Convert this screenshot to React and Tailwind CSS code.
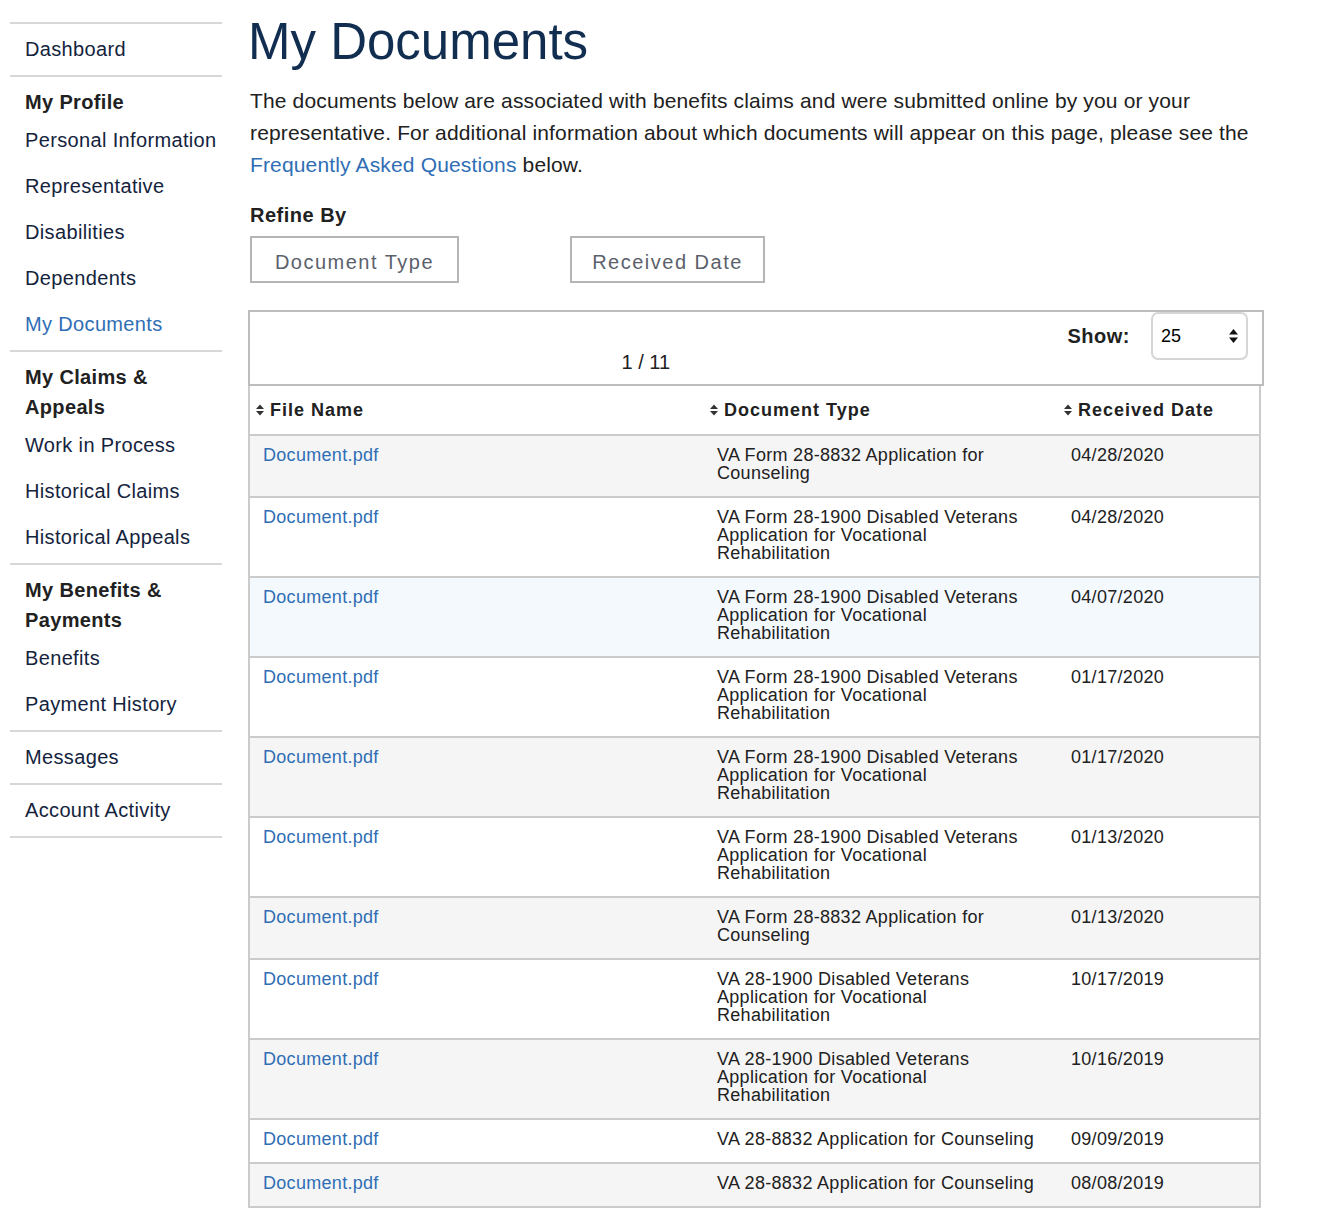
import React from "react";

const FORM_8832 = "VA Form 28-8832 Application for Counseling";
const FORM_1900 = "VA Form 28-1900 Disabled Veterans Application for Vocational Rehabilitation";
const VA_1900 = "VA 28-1900 Disabled Veterans Application for Vocational Rehabilitation";
const VA_8832 = "VA 28-8832 Application for Counseling";

const documents = [
  { type: FORM_8832, date: "04/28/2020", bg: "bg-[#f5f5f5]" },
  { type: FORM_1900, date: "04/28/2020", bg: "bg-white" },
  { type: FORM_1900, date: "04/07/2020", bg: "bg-[#f4f9fe]" },
  { type: FORM_1900, date: "01/17/2020", bg: "bg-white" },
  { type: FORM_1900, date: "01/17/2020", bg: "bg-[#f5f5f5]" },
  { type: FORM_1900, date: "01/13/2020", bg: "bg-white" },
  { type: FORM_8832, date: "01/13/2020", bg: "bg-[#f5f5f5]" },
  { type: VA_1900, date: "10/17/2019", bg: "bg-white" },
  { type: VA_1900, date: "10/16/2019", bg: "bg-[#f5f5f5]" },
  { type: VA_8832, date: "09/09/2019", bg: "bg-white" },
  { type: VA_8832, date: "08/08/2019", bg: "bg-[#f5f5f5]" },
];

const navSections = [
  { items: [{ label: "Dashboard" }] },
  {
    title: "My Profile",
    items: [
      { label: "Personal Information" },
      { label: "Representative" },
      { label: "Disabilities" },
      { label: "Dependents" },
      { label: "My Documents", active: true },
    ],
  },
  {
    title: "My Claims & Appeals",
    items: [{ label: "Work in Process" }, { label: "Historical Claims" }, { label: "Historical Appeals" }],
  },
  {
    title: "My Benefits & Payments",
    items: [{ label: "Benefits" }, { label: "Payment History" }],
  },
  { items: [{ label: "Messages" }] },
  { items: [{ label: "Account Activity" }] },
];

function SortIcon({ className = "" }) {
  return (
    <svg width="8" height="12" viewBox="0 0 8 12" className={className}>
      <path d="M0 5 L4 0.5 L8 5 Z" fill="currentColor" />
      <path d="M0 7 L4 11.5 L8 7 Z" fill="currentColor" />
    </svg>
  );
}

function SideNav() {
  return (
    <nav className="mt-[22px] ml-[10px] w-[212px] shrink-0 border-b-2 border-[#d6d7d9] tracking-[0.35px]">
      {navSections.map((section, i) => (
        <div key={i} className="border-t-2 border-[#d6d7d9] pt-[10px] pb-[11px] pl-[15px] pr-[4px]">
          {section.title && (
            <div className="text-[20px] leading-[30px] font-bold text-[#212121]">{section.title}</div>
          )}
          {section.items.map((item, j) => (
            <a
              key={item.label}
              href="#"
              className={`block text-[20px] leading-[30px] ${
                section.title ? (j === 0 ? "mt-[8px]" : "mt-[16px]") : ""
              } ${item.active ? "text-[#2f6eb5]" : "text-[#14233d]"}`}
            >
              {item.label}
            </a>
          ))}
        </div>
      ))}
    </nav>
  );
}

function DocumentsTable() {
  return (
    <div className="mt-[27px]">
      <div className="w-[1016px] h-[76px] border-2 border-[#bdbdbd] flex">
        <div className="flex-1 flex items-end justify-center pb-[10px]">
          <span className="text-[20px] leading-[24px] text-[#212121]">1 / 11</span>
        </div>
        <div className="flex items-start pl-[26px] pr-[14px]">
          <div className="flex items-center gap-[21px]">
            <span className="text-[20px] font-bold text-[#212121] tracking-[0.5px]">Show:</span>
            <div className="w-[97px] h-[48px] border-2 border-[#d6d6d6] rounded-[7px] bg-white flex items-center justify-between pl-[8px] pr-[8px]">
              <span className="text-[18px] text-black">25</span>
              <svg width="9" height="16" viewBox="0 0 9 16">
                <path d="M0 6.5 L4.5 1 L9 6.5 Z" fill="#111" />
                <path d="M0 9.5 L4.5 15 L9 9.5 Z" fill="#111" />
              </svg>
            </div>
          </div>
        </div>
      </div>

      <div className="w-[1013px] border-x-2 border-[#cbcbcb]">
        <div className="grid grid-cols-[454px_354px_1fr] h-[50px] border-b-2 border-[#cbcbcb] items-center text-[18px] font-bold tracking-[1px] text-[#212121]">
          <div className="flex items-center gap-[6px] pl-[6px]">
            <SortIcon className="text-[#333]" />
            File Name
          </div>
          <div className="flex items-center gap-[6px] pl-[6px]">
            <SortIcon className="text-[#333]" />
            Document Type
          </div>
          <div className="flex items-center gap-[6px] pl-[6px]">
            <SortIcon className="text-[#333]" />
            Received Date
          </div>
        </div>
        {documents.map((doc, i) => (
          <div
            key={i}
            className={`grid grid-cols-[454px_354px_1fr] border-b-2 border-[#cbcbcb] text-[18px] leading-[18px] tracking-[0.3px] ${doc.bg}`}
          >
            <div className="pl-[13px] pt-[10px] pb-[14px]">
              <a href="#" className="text-[#2f6eb5]">
                Document.pdf
              </a>
            </div>
            <div className="pl-[13px] pr-[19px] pt-[10px] pb-[14px] text-[#212121]">{doc.type}</div>
            <div className="pl-[13px] pt-[10px] pb-[14px] text-[#212121]">{doc.date}</div>
          </div>
        ))}
      </div>
    </div>
  );
}

export default function App() {
  return (
    <div className="flex items-start gap-[26px] bg-white font-['Liberation_Sans',Arial,sans-serif] text-[#212121]">
      <SideNav />
      <main className="w-[1016px] pt-[12px]">
        <h1 className="text-[51px] leading-[60px] font-normal text-[#112e51]">My Documents</h1>
        <p className="ml-[2px] mt-[13px] text-[21px] leading-[32px] tracking-[0.15px] text-[#212121]">
          The documents below are associated with benefits claims and were submitted online by you or your
          representative. For additional information about which documents will appear on this page, please see
          the{" "}
          <a href="#" className="text-[#2f6eb5]">
            Frequently Asked Questions
          </a>{" "}
          below.
        </p>
        <h2 className="ml-[2px] mt-[19px] text-[20px] leading-[30px] font-bold tracking-[0.5px] text-[#212121]">
          Refine By
        </h2>
        <div className="ml-[2px] mt-[6px] flex gap-[111px]">
          <button className="w-[209px] h-[47px] pt-[4px] border-2 border-[#b5b5b5] text-[20px] tracking-[1.5px] text-[#5b616b] bg-white">
            Document Type
          </button>
          <button className="w-[195px] h-[47px] pt-[4px] border-2 border-[#b5b5b5] text-[20px] tracking-[1.5px] text-[#5b616b] bg-white">
            Received Date
          </button>
        </div>
        <DocumentsTable />
      </main>
    </div>
  );
}
